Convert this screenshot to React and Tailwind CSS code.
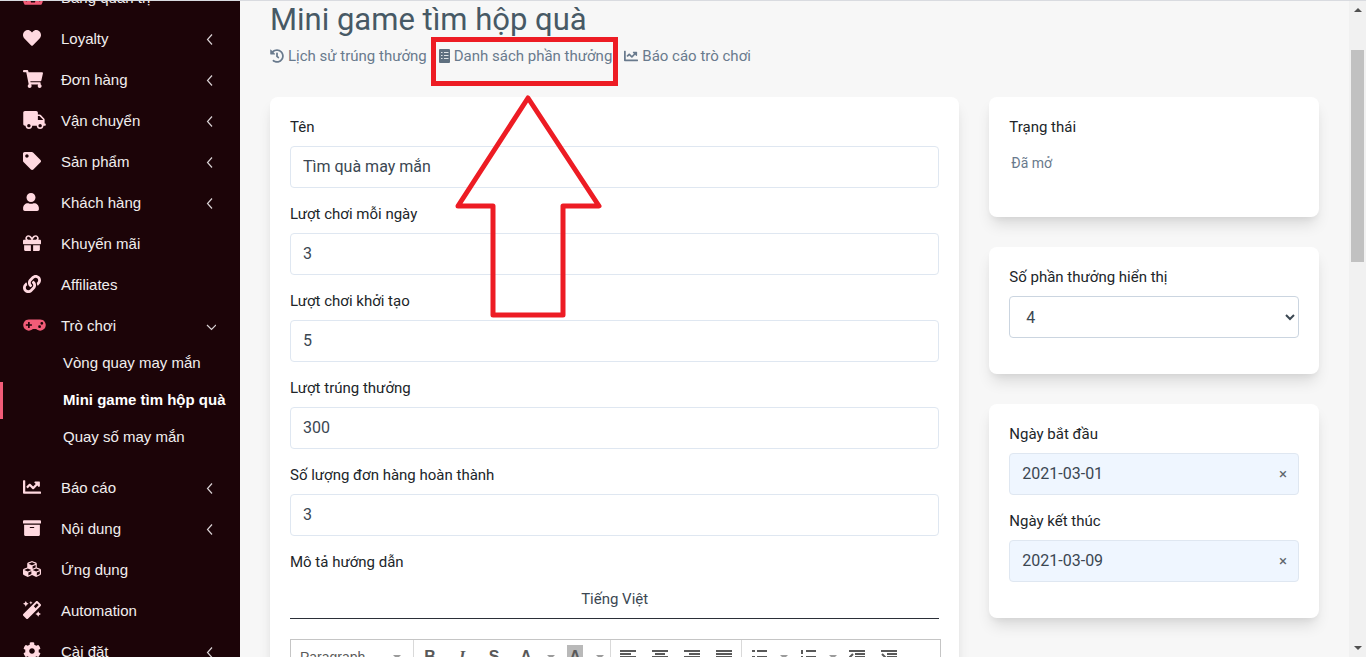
import { useState } from "react";
import {
  FaArchive,
  FaChartLine,
  FaCog,
  FaCubes,
  FaGamepad,
  FaGift,
  FaHeart,
  FaHistory,
  FaLink,
  FaMagic,
  FaShoppingCart,
  FaTachometerAlt,
  FaTag,
  FaTruck,
  FaUser,
} from "react-icons/fa";

const menu = [
  { label: "Bảng quản trị", icon: FaTachometerAlt, size: "w-5", active: true },
  { label: "Loyalty", icon: FaHeart, more: true },
  { label: "Đơn hàng", icon: FaShoppingCart, size: "w-5", more: true },
  { label: "Vận chuyển", icon: FaTruck, size: "w-[23px]", more: true },
  { label: "Sản phẩm", icon: FaTag, more: true },
  { label: "Khách hàng", icon: FaUser, size: "w-4", more: true },
  { label: "Khuyến mãi", icon: FaGift },
  { label: "Affiliates", icon: FaLink },
  {
    label: "Trò chơi",
    icon: FaGamepad,
    size: "w-[23px]",
    active: true,
    children: ["Vòng quay may mắn", "Mini game tìm hộp quà", "Quay số may mắn"],
  },
  { label: "Báo cáo", icon: FaChartLine, more: true },
  { label: "Nội dung", icon: FaArchive, more: true },
  { label: "Ứng dụng", icon: FaCubes },
  { label: "Automation", icon: FaMagic },
  { label: "Cài đặt", icon: FaCog, more: true },
];

const textFields = [
  { id: "name", label: "Tên", value: "Tìm quà may mắn" },
  { id: "per-day", label: "Lượt chơi mỗi ngày", value: "3" },
  { id: "initial", label: "Lượt chơi khởi tạo", value: "5" },
  { id: "wins", label: "Lượt trúng thưởng", value: "300" },
  { id: "orders", label: "Số lượng đơn hàng hoàn thành", value: "3" },
];

function Chevron({ down }) {
  return (
    <svg viewBox="0 0 12 12" className="h-3 w-3" fill="none" stroke="#d9d2d4" strokeWidth="1.2">
      <path d={down ? "M3 4l4.500 4.500L12 4" : "M8 .5L3.500 5.500 8 10.500"} />
    </svg>
  );
}

function ListIcon() {
  return (
    <svg viewBox="0 0 11 14" className="h-[14px] w-[11px]">
      <rect width="11" height="14" rx="1" fill="#5f7080" />
      <path d="M2 3.500h1.500M5 3.500h4.500M2 6.500h1.500M5 6.500h4.500M2 9.500h1.500M5 9.500h4.500" stroke="#dfe3e6" />
    </svg>
  );
}

function Sidebar() {
  return (
    <nav className="w-60 shrink-0 overflow-hidden bg-[#1c0408] font-['Liberation_Sans',sans-serif] text-[15px] text-[#f1eeee]">
      <ul className="-mt-[23px]">
        {menu.map(({ label, icon: Icon, size = "w-[18px]", active, more, children }) => (
          <li key={label}>
            <a href="#" className="flex h-[41px] items-center pl-[23px] pr-6">
              <span className={active ? "w-[38px] text-[#f25c78]" : "w-[38px] text-[#ffd9e0]"}>
                <Icon className={`mb-1 h-[18px] ${size}`} />
              </span>
              <span className="flex-1">{label}</span>
              {(more || children) && <Chevron down={!!children} />}
            </a>
            {children && (
              <ul className="-mt-0.5 mb-3">
                {children.map((child) => (
                  <li key={child}>
                    <a
                      href="#"
                      className={
                        child === "Mini game tìm hộp quà"
                          ? "flex h-[37px] items-center border-l-3 border-[#f25c78] pl-[60px] font-bold whitespace-nowrap text-white"
                          : "flex h-[37px] items-center pl-[63px] whitespace-nowrap"
                      }
                    >
                      {child}
                    </a>
                  </li>
                ))}
              </ul>
            )}
          </li>
        ))}
      </ul>
    </nav>
  );
}

function Card({ className = "", children }) {
  return (
    <section
      className={`rounded-lg bg-white p-5 shadow-[0_10px_15px_-3px_rgba(0,0,0,0.12),0_4px_6px_-2px_rgba(0,0,0,0.05)] ${className}`}
    >
      {children}
    </section>
  );
}

function Field({ id, label, children }) {
  return (
    <div className="mb-4">
      <label htmlFor={id} className="mb-2 block text-[15px] leading-[21px] text-[#212529]">
        {label}
      </label>
      {children}
    </div>
  );
}

function DateField({ id, label, initial }) {
  const [value, setValue] = useState(initial);

  return (
    <Field id={id} label={label}>
      <div className="flex h-[42px] items-center rounded border border-[#dfe7f1] bg-[#eff6ff] pr-[7px]">
        <input
          id={id}
          value={value}
          onChange={(e) => setValue(e.target.value)}
          className="min-w-0 flex-1 bg-transparent pl-3 text-[16px] text-[#3b4752]"
        />
        <button
          type="button"
          aria-label="Xóa"
          onClick={() => setValue("")}
          className="w-4 text-[15px] text-[#5f666d]"
        >
          ×
        </button>
      </div>
    </Field>
  );
}

function ToolButton({ label, children }) {
  return (
    <button type="button" aria-label={label} className="flex h-8 w-8 items-center justify-center">
      {children}
    </button>
  );
}

function LinesIcon({ d }) {
  return (
    <svg viewBox="0 0 16 16" className="h-4 w-4" stroke="#595959" strokeWidth="2" fill="none">
      <path d={d} />
    </svg>
  );
}

function Caret() {
  return (
    <span className="flex w-[17px] justify-center">
      <svg viewBox="0 0 8 4" className="h-1 w-2" fill="#9b9b9b">
        <path d="M0 0h8L4 4z" />
      </svg>
    </span>
  );
}

function EditorToolbar() {
  return (
    <div className="-mr-0.5 flex h-9 border border-[#c5c5c5] font-['Liberation_Sans',sans-serif] text-[#595959]">
      <button
        type="button"
        className="flex w-[123px] items-center justify-between border-r border-[#d9d9d9] pr-2 pl-[9px] text-[14px]"
      >
        Paragraph
        <Caret />
      </button>
      <div className="flex items-center border-r border-[#d9d9d9] pr-0.5 text-[16px]">
        <ToolButton label="Bold">
          <b>B</b>
        </ToolButton>
        <ToolButton label="Italic">
          <b className="font-['Liberation_Serif',serif] italic">I</b>
        </ToolButton>
        <ToolButton label="Strikethrough">
          <b className="line-through">S</b>
        </ToolButton>
        <ToolButton label="Text color">
          <b>A</b>
        </ToolButton>
        <Caret />
        <ToolButton label="Background color">
          <b className="w-4 bg-[#b9b9b9] text-center">A</b>
        </ToolButton>
        <Caret />
      </div>
      <div className="flex items-center border-r border-[#d9d9d9] px-px">
        <ToolButton label="Align left">
          <LinesIcon d="M0 2h16M0 5h11M0 8h16M0 11h11" />
        </ToolButton>
        <ToolButton label="Align center">
          <LinesIcon d="M0 2h16M3 5h10M0 8h16M3 11h10" />
        </ToolButton>
        <ToolButton label="Align right">
          <LinesIcon d="M0 2h16M5 5h11M0 8h16M5 11h11" />
        </ToolButton>
        <ToolButton label="Justify">
          <LinesIcon d="M0 2h16M0 5h16M0 8h16M0 11h16" />
        </ToolButton>
      </div>
      <div className="flex items-center pl-px">
        <ToolButton label="Bullet list">
          <LinesIcon d="M1 2h3M6 2h10M1 8h3M6 8h10" />
        </ToolButton>
        <Caret />
        <ToolButton label="Numbered list">
          <LinesIcon d="M2 1v4M6 2h10M2 7v4M6 8h10" />
        </ToolButton>
        <Caret />
        <ToolButton label="Outdent">
          <LinesIcon d="M0 2h16M6 5h10M6 8h10M4 5L1 8l3 3" />
        </ToolButton>
        <ToolButton label="Indent">
          <LinesIcon d="M0 2h16M6 5h10M6 8h10M1 5l3 3-3 3" />
        </ToolButton>
      </div>
    </div>
  );
}

function Annotation() {
  return (
    <div aria-hidden="true" className="pointer-events-none">
      <div className="absolute top-9 left-[191px] h-[49px] w-[187px] border-5 border-[#ed1c24]" />
      <svg
        viewBox="0 0 148 224"
        className="absolute top-[94px] left-[215px] h-[224px] w-[148px]"
        fill="none"
        stroke="#ed1c24"
        strokeWidth="5"
        strokeLinejoin="round"
      >
        <path d="M73 3L144 111H108V220H38V111H3z" />
      </svg>
    </div>
  );
}

function Scrollbar() {
  return (
    <div
      aria-hidden="true"
      className="flex w-[17px] shrink-0 flex-col items-center bg-[#f1f1f1] py-[7px]"
    >
      <svg viewBox="0 0 8 4" className="h-1 w-2" fill="#505050">
        <path d="M0 4h8L4 0z" />
      </svg>
      <div className="mt-[38px] h-[212px] w-[13px] bg-[#c1c1c1]" />
      <svg viewBox="0 0 8 4" className="mt-auto h-1 w-2" fill="#505050">
        <path d="M0 0h8L4 4z" />
      </svg>
    </div>
  );
}

function App() {
  const [values, setValues] = useState(
    Object.fromEntries(textFields.map((f) => [f.id, f.value]))
  );

  return (
    <div className="flex h-screen overflow-hidden border-t border-[#d9dbe0] bg-[#f7f7f7] font-[Roboto,sans-serif]">
      <Sidebar />

      <main className="relative min-w-0 flex-1 overflow-hidden px-[30px]">
        <h1 className="text-[31px] leading-[38px] text-[#475965]">Mini game tìm hộp quà</h1>
        <div className="mt-1.5 flex h-[22px] gap-3 text-[15px] text-[#697a8d]">
          <a href="#" className="flex items-center gap-1">
            <FaHistory className="h-[14px] w-[14px]" />
            Lịch sử trúng thưởng
          </a>
          <a href="#" className="flex items-center gap-1">
            <ListIcon />
            Danh sách phần thưởng
          </a>
          <a href="#" className="flex items-center gap-1">
            <FaChartLine className="h-[14px] w-[14px]" />
            Báo cáo trò chơi
          </a>
        </div>

        <div className="mt-[30px] grid grid-cols-3 items-start gap-[30px]">
          <Card className="col-span-2">
            {textFields.map(({ id, label }) => (
              <Field key={id} id={id} label={label}>
                <input
                  id={id}
                  value={values[id]}
                  onChange={(e) => setValues({ ...values, [id]: e.target.value })}
                  className="h-[42px] w-full rounded border border-[#dfe7f1] px-3 pb-0.5 text-[16px] text-[#3b4752]"
                />
              </Field>
            ))}
            <p className="mb-2 text-[15px] leading-[21px] text-[#212529]">Mô tả hướng dẫn</p>
            <div className="mb-5 flex h-[38px] justify-center border-b border-[#2b2f38]">
              <button type="button" className="text-[15px] text-[#3b4752]">
                Tiếng Việt
              </button>
            </div>
            <EditorToolbar />
          </Card>

          <div className="flex flex-col gap-[30px]">
            <Card>
              <h2 className="mb-2 text-[15px] leading-[21px] text-[#212529]">Trạng thái</h2>
              <p className="mb-4 h-[35px] px-0.5 text-[14px] leading-[35px] text-[#697a8d]">
                Đã mở
              </p>
            </Card>
            <Card>
              <Field id="visible-rewards" label="Số phần thưởng hiển thị">
                <select
                  id="visible-rewards"
                  defaultValue="4"
                  className="h-[42px] w-full rounded border border-[#cbd5e0] bg-white px-3 text-[16px] text-[#3b4752]"
                >
                  <option>4</option>
                  <option>6</option>
                  <option>9</option>
                </select>
              </Field>
            </Card>
            <Card>
              <DateField id="start-date" label="Ngày bắt đầu" initial="2021-03-01" />
              <DateField id="end-date" label="Ngày kết thúc" initial="2021-03-09" />
            </Card>
          </div>
        </div>

        <Annotation />
      </main>

      <Scrollbar />
    </div>
  );
}

export default App;
